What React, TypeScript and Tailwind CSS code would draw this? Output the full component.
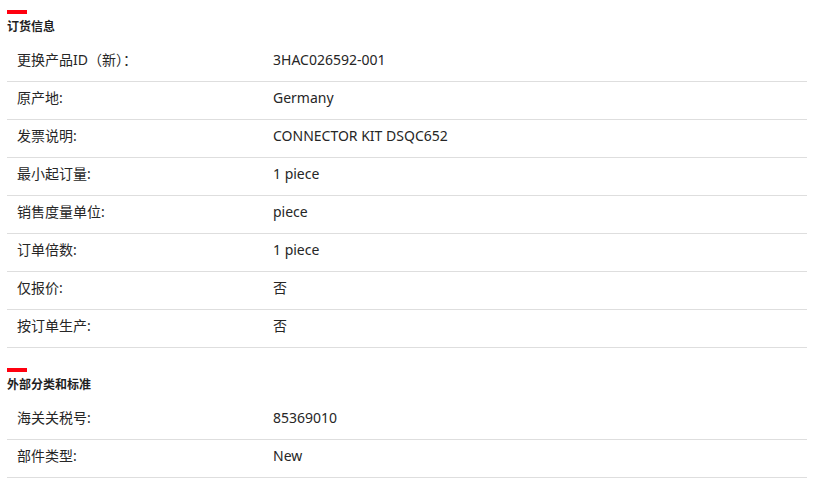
import React from 'react';

interface Row {
    label: string;
    value: string;
}

interface Section {
    title: string;
    rows: Row[];
}

const sections: Section[] = [
    {
        title: '订货信息',
        rows: [
            { label: '更换产品ID（新）：', value: '3HAC026592-001' },
            { label: '原产地:', value: 'Germany' },
            { label: '发票说明:', value: 'CONNECTOR KIT DSQC652' },
            { label: '最小起订量:', value: '1 piece' },
            { label: '销售度量单位:', value: 'piece' },
            { label: '订单倍数:', value: '1 piece' },
            { label: '仅报价:', value: '否' },
            { label: '按订单生产:', value: '否' },
        ],
    },
    {
        title: '外部分类和标准',
        rows: [
            { label: '海关关税号:', value: '85369010' },
            { label: '部件类型:', value: 'New' },
        ],
    },
];

const App: React.FC = () => {
    return (
        <div className="min-h-[486px] bg-white text-[#262626] font-['Noto_Sans','Noto_Sans_CJK_SC',sans-serif]">
            <div className="ml-[7px] w-[800px] pt-[10px]">
                {sections.map((section, i) => (
                    <div key={section.title} className={i > 0 ? 'mt-[20px]' : ''}>
                        {/* red accent bar above section title */}
                        <div className="h-[4px] w-[20px] bg-[#ff000f]" />
                        <h3 className="mt-[5px] mb-[9px] text-[12px] leading-[16px] font-bold text-[#1f1f1f]">
                            {section.title}
                        </h3>
                        <div>
                            {section.rows.map((row) => (
                                <div key={row.label} className="flex items-baseline border-b border-[#dedede] pt-[6px] pb-[11px] leading-[20px]">
                                    <div className="w-[266px] shrink-0 pl-[10px] text-[14px]">{row.label}</div>
                                    <div className="flex-1 text-[14px]">{row.value}</div>
                                </div>
                            ))}
                        </div>
                    </div>
                ))}
            </div>
        </div>
    );
};

export default App;
